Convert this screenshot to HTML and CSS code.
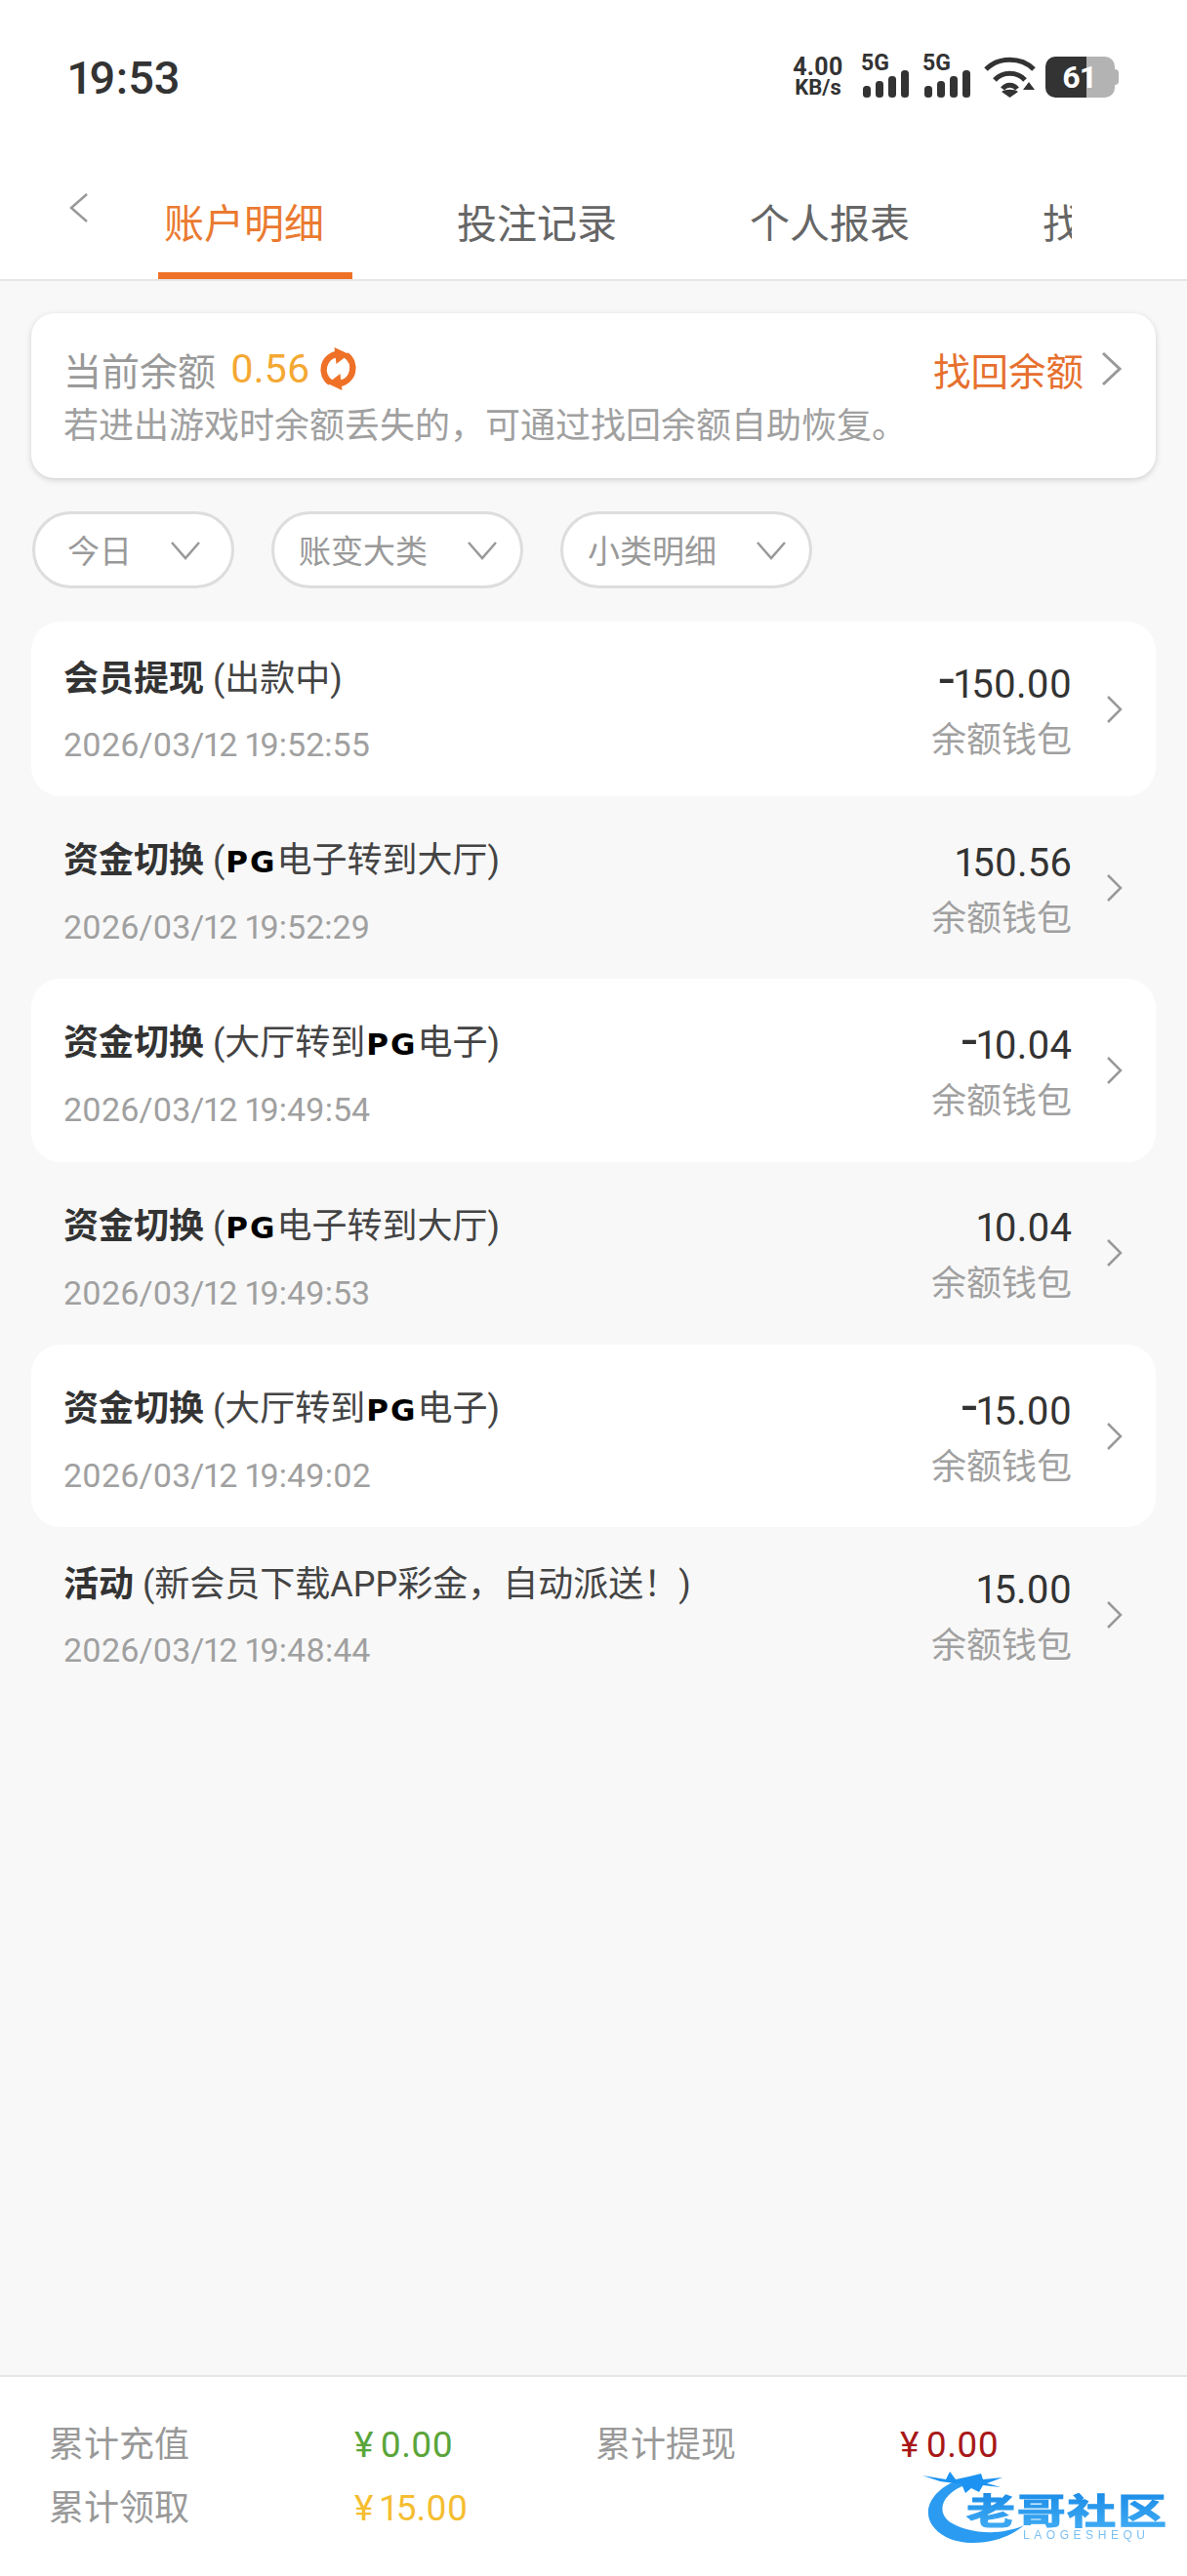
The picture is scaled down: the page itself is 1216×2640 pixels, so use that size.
FILE: index.html
```html
<!DOCTYPE html>
<html lang="zh-CN">
<head>
    <meta charset="UTF-8">
    <meta name="viewport" content="width=device-width, initial-scale=1.0">
    <title>账户明细</title>
    <link rel="stylesheet" href="styles.css">
</head>
<body>
    <div class="status-bar">
        <span class="clock">19:53</span>
        <div class="status-icons">
            <div class="speed"><span class="speed-num">4.00</span><span class="speed-unit">KB/s</span></div>
            <div class="signal">
                <span class="signal-label">5G</span>
                <svg class="signal-bars" width="47" height="28" viewBox="0 0 47 28"><rect x="0" y="16" width="8" height="12" rx="3.5"/><rect x="13" y="11" width="8" height="17" rx="3.5"/><rect x="26" y="6" width="8" height="22" rx="3.5"/><rect x="39" y="0" width="8" height="28" rx="3.5"/></svg>
            </div>
            <div class="signal">
                <span class="signal-label">5G</span>
                <svg class="signal-bars" width="47" height="28" viewBox="0 0 47 28"><rect x="0" y="16" width="8" height="12" rx="3.5"/><rect x="13" y="11" width="8" height="17" rx="3.5"/><rect x="26" y="6" width="8" height="22" rx="3.5"/><rect x="39" y="0" width="8" height="28" rx="3.5"/></svg>
            </div>
            <svg class="wifi" width="53" height="42" viewBox="0 0 53 42"><g fill="none" stroke="#333" stroke-width="5"><path d="M2 13 C15 0 38 0 51 13"/><path d="M11 24 C19 15 34 15 42 24"/><path d="M19 33 C23 28 30 28 34 33"/></g><path d="M18 36 C22 33 31 33 35 36 L26.5 42 Z" fill="#333"/><path d="M38 36 L46 24 L53 24 L53 36 Z" fill="#fff"/><path d="M40 34 L46 26 L52 34 Z" fill="#333"/></svg>
            <div class="battery">
                <span class="battery-num">61</span>
            </div>
        </div>
    </div>

    <div class="nav">
        <svg class="back" width="22" height="32" viewBox="0 0 22 32"><polyline points="19,2 3,16 19,30" fill="none" stroke="#999" stroke-width="2.5"/></svg>
        <div class="tabs">
            <div class="tab tab-active"><span>账户明细</span></div>
            <div class="tab"><span>投注记录</span></div>
            <div class="tab"><span>个人报表</span></div>
            <div class="tab"><span>找回余额</span></div>
        </div>
    </div>

    <div class="main">
        <div class="balance-card">
            <div class="balance-top">
                <span class="balance-label">当前余额</span>
                <span class="balance-num">0.56</span>
                <svg class="refresh" width="41" height="44" viewBox="0 0 40 44"><g fill="none" stroke="#ee7127" stroke-width="6.5"><path d="M19 7 A16 16 0 0 0 12 36"/><path d="M21 37 A16 16 0 0 0 28 8"/></g><path d="M16 0 L31 7 L18 17 Z M24 44 L9 37 L22 27 Z" fill="#ee7127"/></svg>
                <span class="balance-link">找回余额</span>
                <svg class="balance-arrow" width="23" height="36" viewBox="0 0 23 36"><polyline points="3,2 20,18 3,34" fill="none" stroke="#999" stroke-width="3"/></svg>
            </div>
            <div class="balance-tip">若进出游戏时余额丢失的，可通过找回余额自助恢复。</div>
        </div>

        <div class="filters">
            <div class="pill pill-short"><span>今日</span><svg width="30" height="20" viewBox="0 0 30 20"><polyline points="1,2 15,18 29,2" fill="none" stroke="#999" stroke-width="2.5"/></svg></div>
            <div class="pill"><span>账变大类</span><svg width="30" height="20" viewBox="0 0 30 20"><polyline points="1,2 15,18 29,2" fill="none" stroke="#999" stroke-width="2.5"/></svg></div>
            <div class="pill"><span>小类明细</span><svg width="30" height="20" viewBox="0 0 30 20"><polyline points="1,2 15,18 29,2" fill="none" stroke="#999" stroke-width="2.5"/></svg></div>
        </div>

        <div class="records">
            <div class="record record-short record-white">
                <div class="record-left">
                    <div class="record-title"><b>会员提现</b> (出款中)</div>
                    <div class="record-date">2026/03/12 19:52:55</div>
                </div>
                <div class="record-right"><div class="record-amount"><span class="minus">-</span>150.00</div><div class="record-wallet">余额钱包</div></div>
                <svg class="record-arrow" width="17" height="28" viewBox="0 0 17 28"><polyline points="2,1 15,14 2,27" fill="none" stroke="#999" stroke-width="2.5"/></svg>
            </div>
            <div class="record">
                <div class="record-left">
                    <div class="record-title"><b>资金切换</b> (<span class="pg">PG</span>电子转到大厅)</div>
                    <div class="record-date">2026/03/12 19:52:29</div>
                </div>
                <div class="record-right"><div class="record-amount">150.56</div><div class="record-wallet">余额钱包</div></div>
                <svg class="record-arrow" width="17" height="28" viewBox="0 0 17 28"><polyline points="2,1 15,14 2,27" fill="none" stroke="#999" stroke-width="2.5"/></svg>
            </div>
            <div class="record record-white">
                <div class="record-left">
                    <div class="record-title"><b>资金切换</b> (大厅转到<span class="pg">PG</span>电子)</div>
                    <div class="record-date">2026/03/12 19:49:54</div>
                </div>
                <div class="record-right"><div class="record-amount"><span class="minus">-</span>10.04</div><div class="record-wallet">余额钱包</div></div>
                <svg class="record-arrow" width="17" height="28" viewBox="0 0 17 28"><polyline points="2,1 15,14 2,27" fill="none" stroke="#999" stroke-width="2.5"/></svg>
            </div>
            <div class="record">
                <div class="record-left">
                    <div class="record-title"><b>资金切换</b> (<span class="pg">PG</span>电子转到大厅)</div>
                    <div class="record-date">2026/03/12 19:49:53</div>
                </div>
                <div class="record-right"><div class="record-amount">10.04</div><div class="record-wallet">余额钱包</div></div>
                <svg class="record-arrow" width="17" height="28" viewBox="0 0 17 28"><polyline points="2,1 15,14 2,27" fill="none" stroke="#999" stroke-width="2.5"/></svg>
            </div>
            <div class="record record-white">
                <div class="record-left">
                    <div class="record-title"><b>资金切换</b> (大厅转到<span class="pg">PG</span>电子)</div>
                    <div class="record-date">2026/03/12 19:49:02</div>
                </div>
                <div class="record-right"><div class="record-amount"><span class="minus">-</span>15.00</div><div class="record-wallet">余额钱包</div></div>
                <svg class="record-arrow" width="17" height="28" viewBox="0 0 17 28"><polyline points="2,1 15,14 2,27" fill="none" stroke="#999" stroke-width="2.5"/></svg>
            </div>
            <div class="record record-short">
                <div class="record-left">
                    <div class="record-title"><b>活动</b> (新会员下载APP彩金，自动派送！)</div>
                    <div class="record-date">2026/03/12 19:48:44</div>
                </div>
                <div class="record-right"><div class="record-amount">15.00</div><div class="record-wallet">余额钱包</div></div>
                <svg class="record-arrow" width="17" height="28" viewBox="0 0 17 28"><polyline points="2,1 15,14 2,27" fill="none" stroke="#999" stroke-width="2.5"/></svg>
            </div>
        </div>
    </div>

    <div class="footer">
        <div class="footer-label">累计充值</div>
        <div class="footer-value green">¥ 0.00</div>
        <div class="footer-label">累计提现</div>
        <div class="footer-value red">¥ 0.00</div>
        <div class="footer-label">累计领取</div>
        <div class="footer-value yellow">¥ 15.00</div>
    </div>

    <svg class="watermark" width="250" height="78" viewBox="0 0 250 78">
        <defs>
            <linearGradient id="logo-fill" x1="0" y1="0" x2="0" y2="1">
                <stop offset="0" stop-color="#1284e4"/>
                <stop offset="1" stop-color="#45b0f5"/>
            </linearGradient>
        </defs>
        <path d="M38 9 C6 20 -8 50 24 68 C46 79 82 75 104 56 C80 67 46 65 27 52 C13 40 22 22 46 14 Z" fill="#2a9bf0"/>
        <path d="M0 5 L24 9 L28 1 L34 9 L48 6 L60 3 L62 9 L82 7 L66 13 L80 17 L62 15 L58 22 L50 18 L44 23 L40 14 L18 11 Z" fill="#1c93f2"/>
        <text class="logo-text" transform="translate(45 55) scale(1 .72)" fill="url(#logo-fill)" stroke="url(#logo-fill)" stroke-width="1.5" textLength="205">老哥社区</text>
        <text class="logo-small" x="103" y="70" textLength="125">LAOGESHEQU</text>
    </svg>
</body>
</html>
```

FILE: styles.css
```css
* {
    box-sizing: border-box;
}
body {
    margin: 0;
    width: 1216px;
    height: 2640px;
    position: relative;
    display: flex;
    flex-direction: column;
    background-color: #f8f8f8;
    font-family: Roboto, "Noto Sans CJK SC", sans-serif;
    font-variant-numeric: proportional-nums;
    color: #333;
    overflow: hidden;
}
svg {
    display: block;
    flex-shrink: 0;
}

.status-bar {
    height: 165px;
    padding: 57px 70px 0 70px;
    background-color: #fff;
    display: flex;
    justify-content: space-between;
    align-items: flex-start;
}
.clock {
    font-size: 47px;
    font-weight: 500;
    line-height: 46px;
    color: #333;
}
.status-icons {
    display: flex;
    align-items: flex-end;
    height: 43px;
}
.speed {
    width: 56px;
    display: flex;
    flex-direction: column;
    align-items: center;
    font-weight: 700;
    color: #333;
    margin-right: 18px;
}
.speed-num {
    font-size: 25px;
    line-height: 23px;
}
.speed-unit {
    font-size: 22px;
    line-height: 20px;
}
.signal {
    width: 47px;
    height: 42px;
    position: relative;
    margin-right: 16px;
    display: flex;
    align-items: flex-end;
    fill: #333;
}
.signal-label {
    position: absolute;
    top: -3px;
    left: -2px;
    font-size: 23px;
    line-height: 20px;
    font-weight: 700;
}
.wifi {
    margin-left: -2px;
    margin-right: 10px;
}
.battery {
    width: 71px;
    height: 42px;
    margin-right: 4px;
    border-radius: 10px;
    background: linear-gradient(to right, #333 42px, #b3b3b3 42px);
    position: relative;
    display: flex;
    align-items: center;
    padding-left: 17px;
}
.battery::after {
    content: "";
    position: absolute;
    right: -4px;
    top: 13px;
    width: 4px;
    height: 16px;
    background-color: #b3b3b3;
    border-radius: 0 4px 4px 0;
}
.battery-num {
    font-size: 32px;
    font-weight: 700;
    color: #fff;
}

.nav {
    height: 123px;
    padding-left: 70px;
    background-color: #fff;
    border-bottom: 2px solid #e5e5e5;
    display: flex;
    align-items: flex-start;
}
.back {
    margin-top: 32px;
}
.tabs {
    margin-left: 70px;
    width: 936px;
    height: 121px;
    overflow: hidden;
    display: flex;
}
.tab {
    width: 300px;
    flex-shrink: 0;
    font-size: 41px;
    color: #666;
}
.tab span {
    display: block;
    width: 199px;
    height: 121px;
    padding: 41px 0 0 6px;
    line-height: 48px;
    white-space: nowrap;
}
.tab-active {
    color: #ea7a30;
}
.tab-active span {
    border-bottom: 7px solid #ee7127;
}

.main {
    flex: 1;
}

.balance-card {
    margin: 33px 32px 0 32px;
    height: 169px;
    padding: 35px 33px 0 33px;
    background-color: #fff;
    border-radius: 24px;
    box-shadow: 0 2px 6px rgba(0, 0, 0, 0.16);
}
.balance-top {
    display: flex;
    align-items: center;
    height: 44px;
}
.balance-label {
    font-size: 39px;
    color: #999;
}
.balance-num {
    font-size: 41px;
    color: #f4a832;
    margin-left: 15px;
}
.refresh {
    margin-left: 9px;
}
.balance-link {
    margin-left: auto;
    font-size: 38.5px;
    color: #e6702e;
}
.balance-arrow {
    margin-left: 17px;
    margin-right: 1px;
}
.balance-tip {
    margin-top: 15px;
    font-size: 36px;
    line-height: 44px;
    color: #a0a0a0;
    white-space: nowrap;
}

.filters {
    display: flex;
    gap: 38px;
    margin: 34px 0 0 33px;
}
.pill {
    width: 258px;
    height: 79px;
    padding: 0 24px 0 25px;
    background-color: #fff;
    border: 3px solid #ddd;
    border-radius: 40px;
    display: flex;
    align-items: center;
    justify-content: space-between;
    font-size: 33px;
    color: #999;
}
.pill span {
    margin-top: -2px;
}
.pill-short {
    width: 207px;
    padding: 0 32px 0 33px;
}

.records {
    margin: 34px 32px 0 32px;
}
.record {
    height: 187.3px;
    padding: 0 34px 0 33px;
    border-radius: 30px;
    display: flex;
    align-items: center;
}
.record-short {
    height: 179px;
}
.record-white {
    background-color: #fff;
}
.record-left {
    flex: 1;
    margin-top: 13px;
}
.record-short .record-left {
    margin-top: 5px;
}
.record-title {
    font-size: 36px;
    line-height: 44px;
    color: #444;
    white-space: nowrap;
}
.record-title b {
    color: #333;
}
.pg {
    font-family: "DejaVu Sans", sans-serif;
    font-weight: 700;
    font-size: 31px;
    color: #000;
    letter-spacing: 2px;
    margin-left: 1px;
}
.record-date {
    margin-top: 23px;
    font-size: 34px;
    line-height: 44px;
    color: #a0a0a0;
}
.record-right {
    display: flex;
    flex-direction: column;
    align-items: flex-end;
    gap: 13px;
    margin-top: 7px;
}
.record-amount {
    font-size: 40px;
    line-height: 44px;
    color: #333;
}
.minus {
    font-size: 58px;
    line-height: 30px;
}
.record-wallet {
    font-size: 36px;
    line-height: 44px;
    color: #a0a0a0;
}
.record-arrow {
    margin-left: 35px;
}

.footer {
    height: 206px;
    padding: 38px 0 0 50px;
    background-color: #fff;
    border-top: 2px solid #e5e5e5;
    display: grid;
    grid-template-columns: 313px 247px 312px 1fr;
    grid-auto-rows: 65px;
    font-size: 36px;
}
.footer-label {
    color: #999;
    line-height: 64px;
}
.footer-value {
    line-height: 64px;
    font-size: 37px;
    word-spacing: -2px;
}
.green {
    color: #5aa53a;
}
.red {
    color: #a81818;
}
.yellow {
    color: #f5bd30;
}

.watermark {
    position: absolute;
    left: 945px;
    top: 2532px;
    filter: blur(0.6px);
}
.logo-text {
    font-family: "Noto Sans CJK SC", sans-serif;
    font-weight: 700;
    font-size: 50px;
}
.logo-small {
    font-family: "Liberation Sans", sans-serif;
    font-size: 12px;
    fill: #7cc0f2;
}
```
